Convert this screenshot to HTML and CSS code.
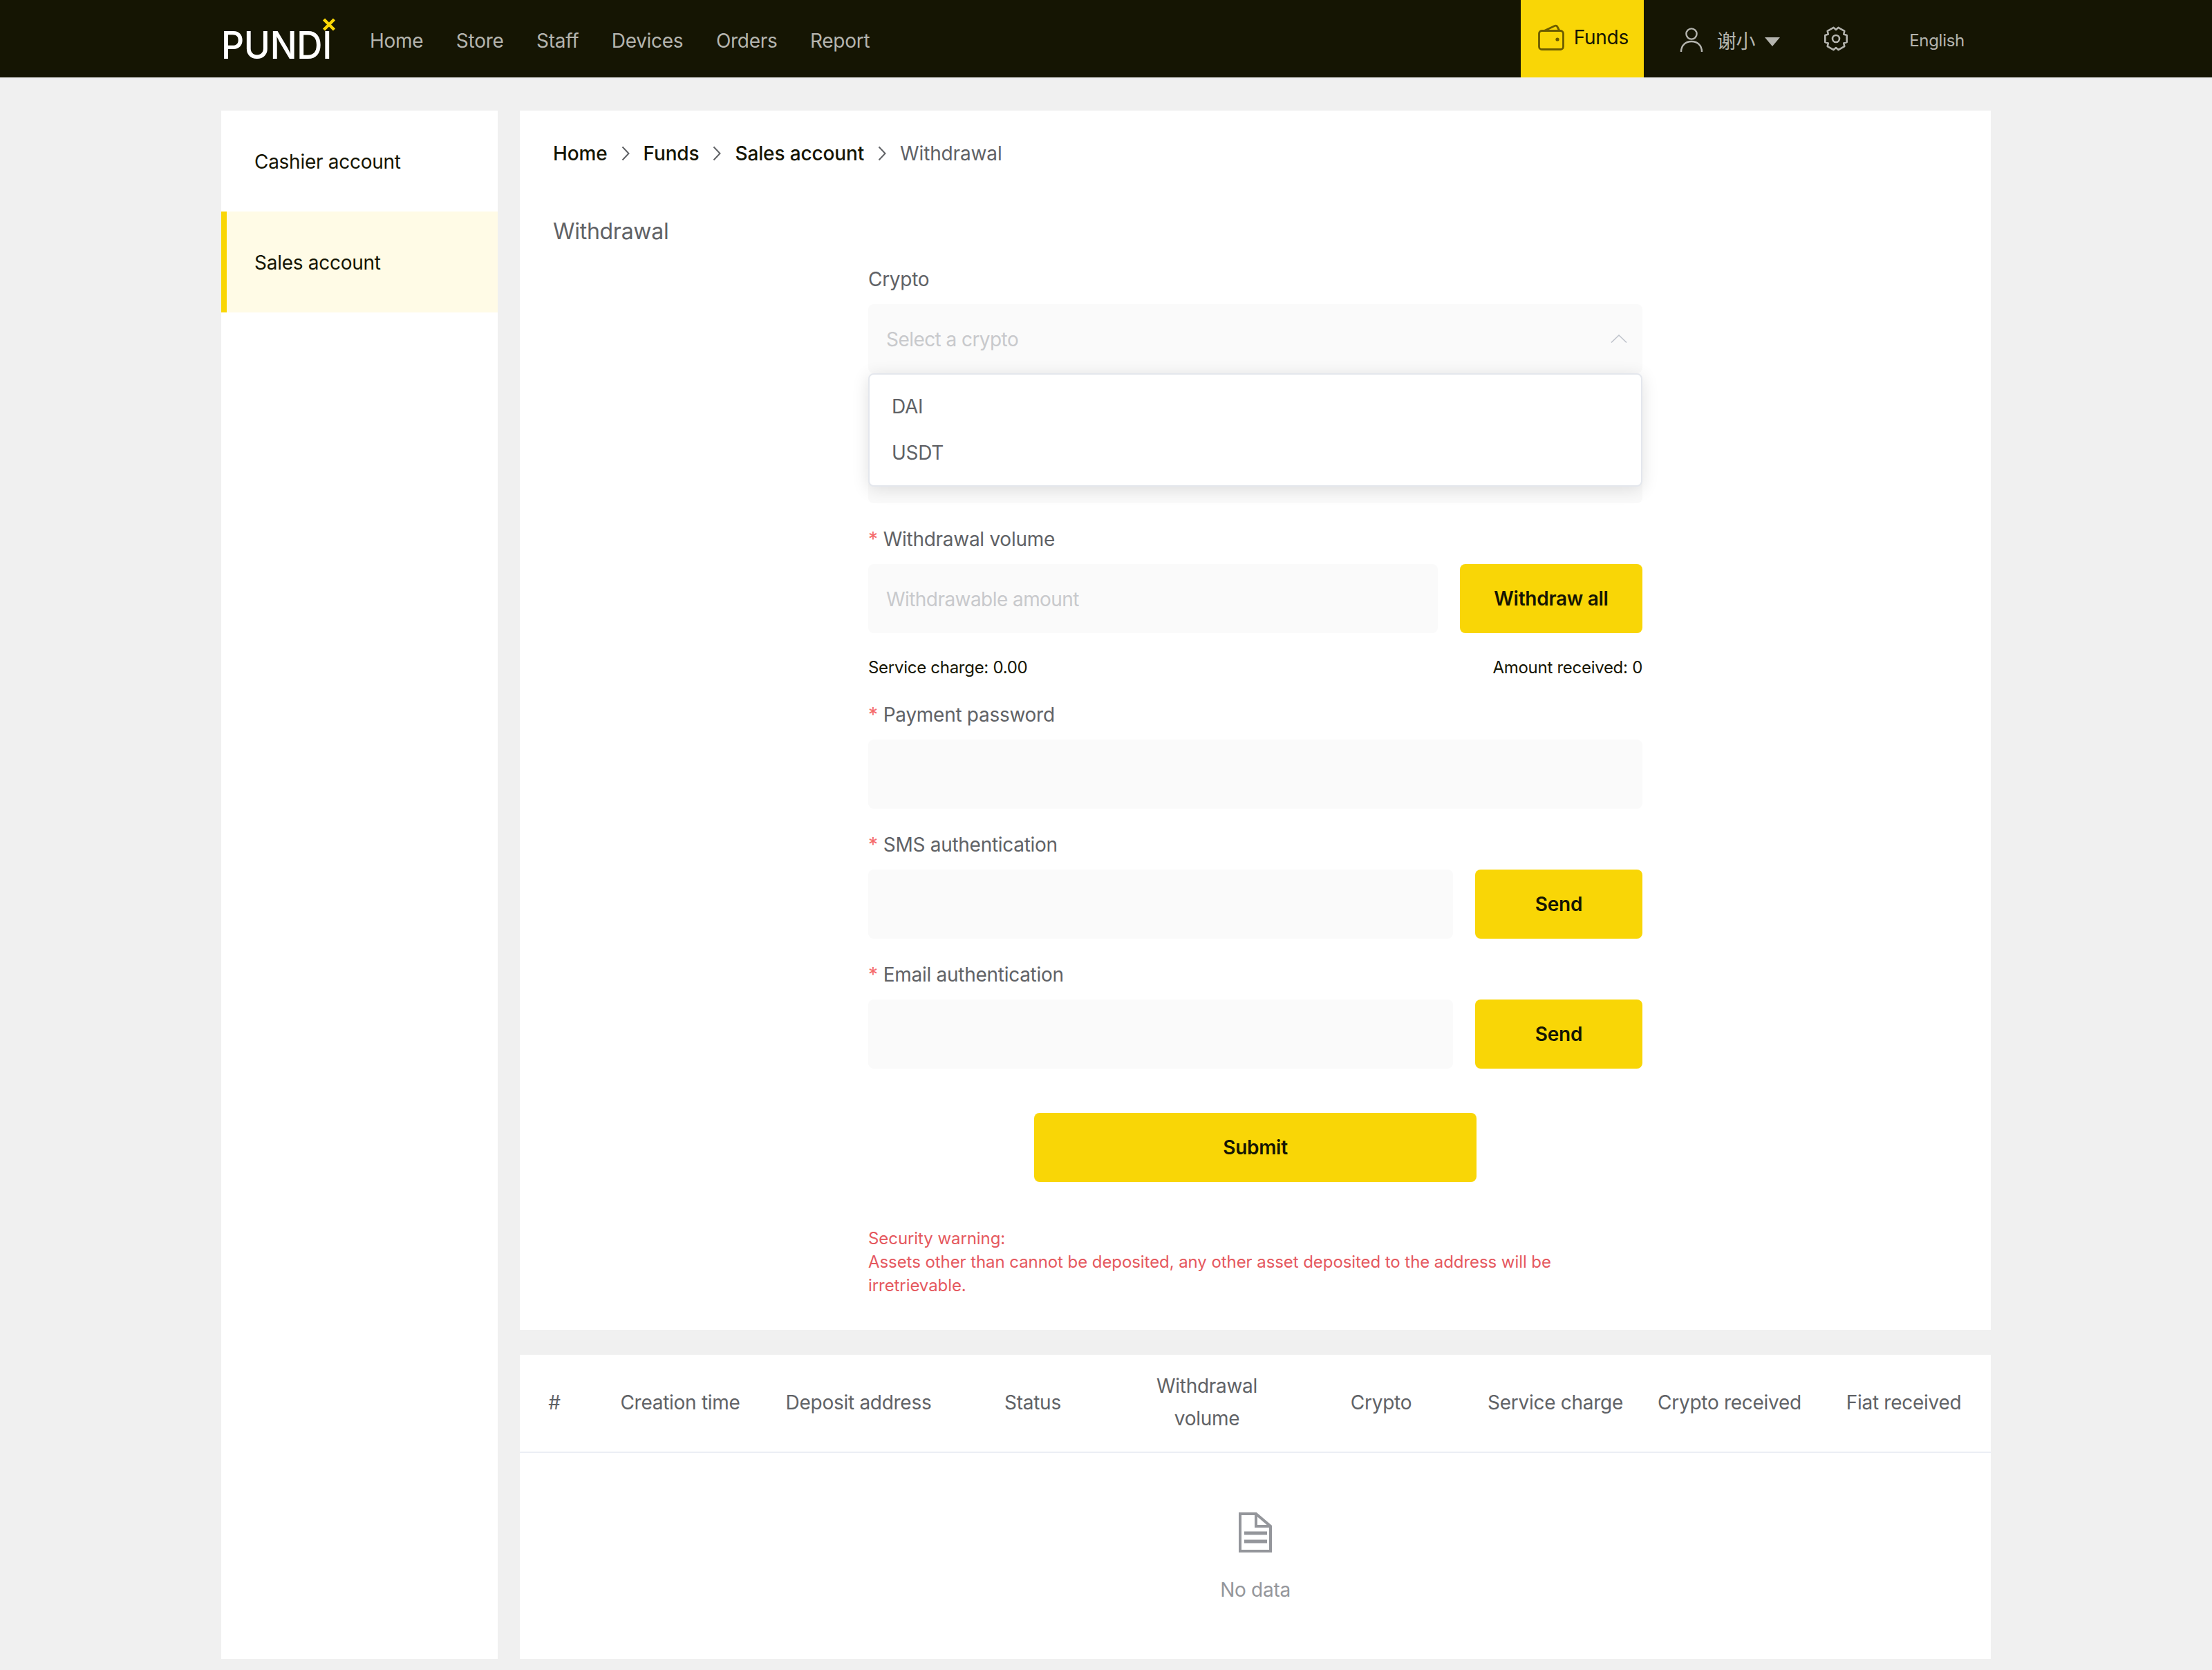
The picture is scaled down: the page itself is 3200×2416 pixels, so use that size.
FILE: index.html
```html
<!DOCTYPE html>
<html lang="en">
<head>
  <meta charset="UTF-8">
  <meta name="viewport" content="width=device-width, initial-scale=1">
  <title>Withdrawal</title>
  <link rel="stylesheet" href="styles.css">
</head>
<body>
  <header class="topbar">
    <a class="logo" href="#">
      <svg width="200" height="72" viewBox="0 0 200 72">
        <text x="0" y="59" textLength="160" lengthAdjust="spacingAndGlyphs" class="logo-text">PUNDI</text>
        <path d="M148.500 2l15 15M163.500 2l-15 15" stroke="#f9d606" stroke-width="4.500" fill="none"/>
      </svg>
    </a>
    <nav class="nav">
      <a href="#">Home</a>
      <a href="#">Store</a>
      <a href="#">Staff</a>
      <a href="#">Devices</a>
      <a href="#">Orders</a>
      <a href="#">Report</a>
    </nav>
    <div class="topbar-right">
      <a class="funds" href="#">
        <svg width="38" height="38" viewBox="0 0 38 38" fill="none" stroke="#6b5c00" stroke-width="2.800">
          <rect x="1.500" y="9.500" width="35" height="27" rx="4"/>
          <path d="M9 9.500L24 2.500q2.800-1 3.800 1L31 9.500"/>
          <circle cx="28" cy="22" r="2.600" fill="#6b5c00" stroke="none"/>
        </svg>
        <span>Funds</span>
      </a>
      <div class="user">
        <svg width="34" height="36" viewBox="0 0 34 36" fill="none" stroke="#b4b4ae" stroke-width="2.400">
          <circle cx="17" cy="9" r="7.600"/>
          <path d="M2 35c0-9 6-15 15-15s15 6 15 15"/>
        </svg>
        <span class="user-name">谢小</span>
        <i class="caret"></i>
      </div>
      <svg class="gear" width="36" height="36" viewBox="0 0 36 36" fill="none" stroke="#b4b4ae" stroke-width="2.600" stroke-linejoin="round">
        <path d="M33.690 12.900V23.100L29.260 24.500 30.260 29.040 21.430 34.140 18 31 14.570 34.140 5.740 29.040 6.740 24.500 2.310 23.100V12.900L6.740 11.500 5.740 6.960 14.570 1.860 18 5 21.430 1.860 30.260 6.960 29.260 11.500z"/>
        <circle cx="18" cy="18" r="5"/>
      </svg>
      <a class="lang" href="#">English</a>
    </div>
  </header>

  <div class="page">
    <aside class="sidebar">
      <a class="side-item" href="#">Cashier account</a>
      <a class="side-item active" href="#">Sales account</a>
    </aside>

    <div class="content">
      <main class="panel form-panel">
        <div class="crumbs">
          <a href="#">Home</a>
          <svg class="crumb-sep" width="12" height="22" viewBox="0 0 12 22"><path d="M1.500 1.500l9 9.500-9 9.500" fill="none" stroke="#606266" stroke-width="2"/></svg>
          <a href="#">Funds</a>
          <svg class="crumb-sep" width="12" height="22" viewBox="0 0 12 22"><path d="M1.500 1.500l9 9.500-9 9.500" fill="none" stroke="#606266" stroke-width="2"/></svg>
          <a href="#">Sales account</a>
          <svg class="crumb-sep" width="12" height="22" viewBox="0 0 12 22"><path d="M1.500 1.500l9 9.500-9 9.500" fill="none" stroke="#606266" stroke-width="2"/></svg>
          <span>Withdrawal</span>
        </div>
        <h1 class="title">Withdrawal</h1>

        <form class="form">
          <div class="field">
            <label class="label">Crypto</label>
            <div class="select">
              <input class="input" type="text" placeholder="Select a crypto" readonly>
              <svg class="chevron" width="24" height="12" viewBox="0 0 24 12"><path d="M1 11.500L12 1l11 10.500" fill="none" stroke="#c0c4cc" stroke-width="1.600"/></svg>
              <ul class="dropdown">
                <li>DAI</li>
                <li>USDT</li>
              </ul>
            </div>
          </div>

          <div class="field">
            <div class="label"></div>
            <input class="input" type="text">
          </div>

          <div class="field">
            <label class="label req">Withdrawal volume</label>
            <div class="row">
              <input class="input" type="text" placeholder="Withdrawable amount">
              <button class="btn btn-all" type="button">Withdraw all</button>
            </div>
          </div>

          <div class="charge">
            <span>Service charge: 0.00</span>
            <span>Amount received: 0</span>
          </div>

          <div class="field">
            <label class="label req">Payment password</label>
            <input class="input" type="password">
          </div>

          <div class="field">
            <label class="label req">SMS authentication</label>
            <div class="row">
              <input class="input" type="text">
              <button class="btn btn-send" type="button">Send</button>
            </div>
          </div>

          <div class="field">
            <label class="label req">Email authentication</label>
            <div class="row">
              <input class="input" type="text">
              <button class="btn btn-send" type="button">Send</button>
            </div>
          </div>

          <button class="btn btn-submit" type="button">Submit</button>

          <p class="warning">Security warning:<br>Assets other than cannot be deposited, any other asset deposited to the address will be irretrievable.</p>
        </form>
      </main>

      <section class="panel table-panel">
        <table class="records">
          <thead>
            <tr>
              <th class="col-num">#</th>
              <th class="col-time">Creation time</th>
              <th>Deposit address</th>
              <th>Status</th>
              <th>Withdrawal<br>volume</th>
              <th>Crypto</th>
              <th>Service charge</th>
              <th>Crypto received</th>
              <th>Fiat received</th>
            </tr>
          </thead>
        </table>
        <div class="empty">
          <svg width="48" height="58" viewBox="0 0 48 58" fill="none" stroke="#94969b" stroke-width="4">
            <path d="M2 2h23l21 18v36H2z"/>
            <path d="M25 2v18h21"/>
            <path d="M8 30h33M8 42h33" stroke-width="5"/>
          </svg>
          <p>No data</p>
        </div>
      </section>
    </div>
  </div>
</body>
</html>
```

FILE: styles.css
```css
* {
  box-sizing: border-box;
}

body {
  margin: 0;
  background-color: #f0f0f0;
  color: #151503;
  font-family: Inter, "Noto Sans CJK SC", sans-serif;
  font-size: 28px;
  letter-spacing: -0.01em;
}

a {
  color: inherit;
  text-decoration: none;
}

/* top bar */
.topbar {
  display: flex;
  align-items: center;
  height: 112px;
  padding: 0 358px 0 320px;
  background-color: #151503;
}

.logo {
  display: block;
  align-self: flex-start;
  height: 72px;
  margin-top: 26px;
}

.logo-text {
  fill: #fff;
  font-size: 55px;
  font-weight: 500;
}

.nav {
  display: flex;
  gap: 47.5px;
  margin-left: 15px;
  padding-top: 6px;
  color: #b4b4ae;
}

.topbar-right {
  display: flex;
  align-items: center;
  height: 100%;
  margin-left: auto;
  color: #b4b4ae;
}

.funds {
  display: flex;
  align-items: center;
  gap: 14px;
  height: 100%;
  width: 178px;
  padding-left: 25px;
  padding-bottom: 4px;
  background-color: #f9d606;
  color: #151503;
}

.user {
  display: flex;
  align-items: center;
  margin-left: 52px;
  padding-top: 4px;
}

.user-name {
  margin-left: 20px;
}

.caret {
  width: 0;
  height: 0;
  margin-left: 14px;
  margin-top: 4px;
  border-left: 11px solid transparent;
  border-right: 11px solid transparent;
  border-top: 13px solid #b4b4ae;
}

.gear {
  margin-left: 63px;
  margin-bottom: 1px;
}

.lang {
  margin-left: 88px;
  padding-top: 4px;
  font-size: 24px;
}

/* layout */
.page {
  display: grid;
  grid-template-columns: 400px 1fr;
  gap: 32px;
  min-height: calc(100vh - 112px);
  padding: 48px 320px 16px;
}

.sidebar {
  background-color: #fff;
}

.side-item {
  display: flex;
  align-items: center;
  height: 146px;
  padding-left: 48px;
  padding-top: 2px;
}

.side-item.active {
  background-color: #fffbe6;
  border-left: 8px solid #f9d606;
  padding-left: 40px;
}

.content {
  display: flex;
  flex-direction: column;
  gap: 36px;
}

.panel {
  background-color: #fff;
}

.form-panel {
  padding: 44px 48px 47px;
}

/* breadcrumb */
.crumbs {
  display: flex;
  align-items: center;
  height: 36px;
  font-weight: 500;
  letter-spacing: -0.005em;
}

.crumb-sep {
  margin: 0 20px;
}

.crumbs span {
  font-weight: 400;
  color: #606266;
}

.title {
  margin: 75px 0 0;
  font-size: 32px;
  line-height: 40px;
  font-weight: 400;
  color: #606266;
}

/* form */
.form {
  width: 1120px;
  margin: 31px auto 0;
}

.field {
  margin-bottom: 34px;
}

.label {
  display: block;
  height: 36px;
  margin-bottom: 18px;
  line-height: 36px;
  color: #606266;
}

.req::before {
  content: "*";
  margin-right: 8px;
  color: #f56c6c;
}

.input {
  display: block;
  width: 100%;
  height: 100px;
  padding: 2px 26px 0;
  border: 0;
  border-radius: 8px;
  background-color: #fafafa;
  color: #606266;
  font: inherit;
  letter-spacing: inherit;
  outline: none;
}

.input::placeholder {
  color: #c8c9cc;
  letter-spacing: -0.02em;
}

.select {
  position: relative;
}

.chevron {
  position: absolute;
  top: 44px;
  right: 22px;
}

.dropdown {
  position: absolute;
  top: 100px;
  left: 0;
  width: 100%;
  margin: 0;
  padding: 13px 0;
  list-style: none;
  background-color: #fff;
  border: 2px solid #e4e7ed;
  border-radius: 8px;
  box-shadow: 0 4px 24px rgba(0, 0, 0, 0.12);
  color: #606266;
}

.dropdown li {
  height: 67px;
  padding-left: 32px;
  line-height: 67px;
}

.row {
  display: flex;
  gap: 32px;
}

.btn {
  flex-shrink: 0;
  height: 100px;
  border: 0;
  border-radius: 8px;
  background-color: #f9d606;
  color: #151503;
  font: inherit;
  font-weight: 600;
  letter-spacing: inherit;
}

.btn-all {
  width: 264px;
}

.btn-send {
  width: 242px;
}

.btn-submit {
  display: block;
  width: 640px;
  margin: 64px auto 0;
}

.charge {
  display: flex;
  justify-content: space-between;
  height: 66px;
  font-size: 24px;
  line-height: 32px;
}

.warning {
  width: 1000px;
  margin: 65px 0 0;
  font-size: 24px;
  line-height: 34px;
  letter-spacing: -0.003em;
  color: #e5585e;
}

/* records */
.table-panel {
  flex-grow: 1;
}

.records {
  width: 100%;
  table-layout: fixed;
  border-collapse: collapse;
}

.records th {
  width: 252px;
  height: 141px;
  padding: 0 0 2px;
  border-bottom: 2px solid #ebeef5;
  font-weight: 400;
  line-height: 47px;
  color: #606266;
}

.records .col-num {
  width: 100px;
}

.records .col-time {
  width: 264px;
}

.empty {
  display: flex;
  flex-direction: column;
  align-items: center;
  padding-top: 86px;
  color: #94969b;
}

.empty p {
  margin: 37px 0 0;
}
```
